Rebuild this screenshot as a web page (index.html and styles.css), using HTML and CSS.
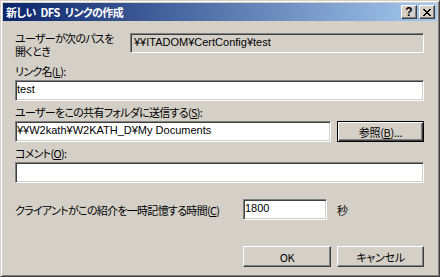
FILE: index.html
```html
<!DOCTYPE html>
<html lang="ja">
<head>
  <meta charset="UTF-8">
  <title>新しい DFS リンクの作成</title>
  <link rel="stylesheet" href="styles.css">
</head>
<body>
<div class="window">
  <div class="titlebar">
    <span class="title">新しい DFS リンクの作成</span>
    <div class="caption-buttons">
      <button class="cap-btn help">?</button>
      <button class="cap-btn">
        <svg width="8" height="7" viewBox="0 0 8 7"><path d="M0 0h2v1h-2zM6 0h2v1h-2zM1 1h2v1h-2zM5 1h2v1h-2zM2 2h4v1h-4zM3 3h2v1h-2zM2 4h4v1h-4zM1 5h2v1h-2zM5 5h2v1h-2zM0 6h2v1h-2zM6 6h2v1h-2z" fill="#000"/></svg>
      </button>
    </div>
  </div>

  <div class="content">
    <div class="path-row">
      <div class="path-label">ユーザーが次のパスを<br>開くとき</div>
      <div class="field readonly">¥¥ITADOM¥CertConfig¥test</div>
    </div>

    <div class="label">リンク名(<u>L</u>):</div>
    <div class="field">test</div>

    <div class="label label-tight">ユーザーをこの共有フォルダに送信する(<u>S</u>):</div>
    <div class="send-row">
      <div class="field grow">¥¥W2kath¥W2KATH_D¥My Documents</div>
      <button class="btn btn-default">参照(<u>B</u>)...</button>
    </div>

    <div class="label label-tight">コメント(<u>O</u>):</div>
    <div class="field"></div>

    <div class="cache-row">
      <div class="cache-label">クライアントがこの紹介を一時記憶する時間(<u>C</u>)</div>
      <div class="field time">1800</div>
      <span class="unit">秒</span>
    </div>

    <div class="actions">
      <button class="btn btn-ok">OK</button>
      <button class="btn">キャンセル</button>
    </div>
  </div>
</div>
</body>
</html>
```

FILE: styles.css
```css
body {
  margin: 0;
  font-family: "Noto Sans CJK JP", sans-serif;
  font-size: 11px;
  letter-spacing: -0.7px;
  font-feature-settings: "palt";
  color: #000;
  background-color: #d4d0c8;
}

.window {
  width: 440px;
  height: 277px;
  box-sizing: border-box;
  background-color: #d4d0c8;
  border: 1px solid;
  border-color: #d4d0c8 #404040 #404040 #d4d0c8;
  box-shadow: inset 1px 1px #ffffff, inset -1px -1px #808080;
  padding: 2px;
}

.titlebar {
  height: 18px;
  display: flex;
  align-items: center;
  justify-content: space-between;
  padding: 0 2px 0 3px;
  background: linear-gradient(to right, #0a246a, #a6caf0);
}

.title {
  color: #ffffff;
  font-weight: bold;
  font-size: 11px;
  letter-spacing: -0.6px;
  word-spacing: 3px;
  line-height: 18px;
  white-space: nowrap;
}

.caption-buttons {
  display: flex;
  gap: 2px;
}

.cap-btn {
  width: 16px;
  height: 14px;
  box-sizing: border-box;
  padding: 0;
  display: flex;
  align-items: center;
  justify-content: center;
  background-color: #d4d0c8;
  border: 1px solid;
  border-color: #ffffff #404040 #404040 #ffffff;
  box-shadow: inset -1px -1px #808080;
}

.cap-btn.help {
  font-family: "Liberation Sans", sans-serif;
  font-weight: bold;
  font-size: 12px;
  letter-spacing: 0;
  line-height: 12px;
  color: #000;
}

.content {
  padding: 0 13px 0 12px;
}

.path-row {
  display: grid;
  grid-template-columns: 115px 1fr;
  margin-top: 12px;
}

.path-label {
  line-height: 13px;
  margin-top: -1px;
  white-space: nowrap;
}

.label {
  line-height: 15px;
  margin: 6px 0 1px;
  white-space: nowrap;
}

.label-tight {
  margin-top: 4px;
}

.field {
  box-sizing: border-box;
  height: 21px;
  background-color: #ffffff;
  border: 1px solid;
  border-color: #808080 #ffffff #ffffff #808080;
  box-shadow: inset 1px 1px #404040, inset -1px -1px #d4d0c8;
  padding: 0 1px;
  line-height: 17px;
  font-family: "Liberation Sans", "Noto Sans CJK JP", sans-serif;
  font-size: 11px;
  letter-spacing: 0;
  white-space: nowrap;
  overflow: hidden;
}

.field.readonly {
  height: 20px;
  background-color: #d4d0c8;
  padding-left: 3px;
  line-height: 17px;
}

.send-row {
  display: flex;
  gap: 6px;
}

.grow {
  flex: 1;
}

.cache-row {
  display: flex;
  align-items: center;
  margin-top: 16px;
}

.cache-label {
  width: 228px;
  white-space: nowrap;
}

.field.time {
  width: 84px;
}

.unit {
  margin-left: 10px;
}

.actions {
  display: flex;
  justify-content: flex-end;
  gap: 6px;
  margin-top: 26px;
}

.btn {
  box-sizing: border-box;
  width: 87px;
  height: 21px;
  padding: 0;
  background-color: #d4d0c8;
  border: 1px solid;
  border-color: #ffffff #404040 #404040 #ffffff;
  box-shadow: inset -1px -1px #808080;
  font-family: "Noto Sans CJK JP", sans-serif;
  font-size: 11px;
  letter-spacing: -0.3px;
  font-feature-settings: "palt";
  color: #000;
}

.btn-ok {
  width: 88px;
}

.btn-default {
  border-color: #000000;
  box-shadow: inset 1px 1px #ffffff, inset -1px -1px #404040, inset -2px -2px #808080;
}
```
